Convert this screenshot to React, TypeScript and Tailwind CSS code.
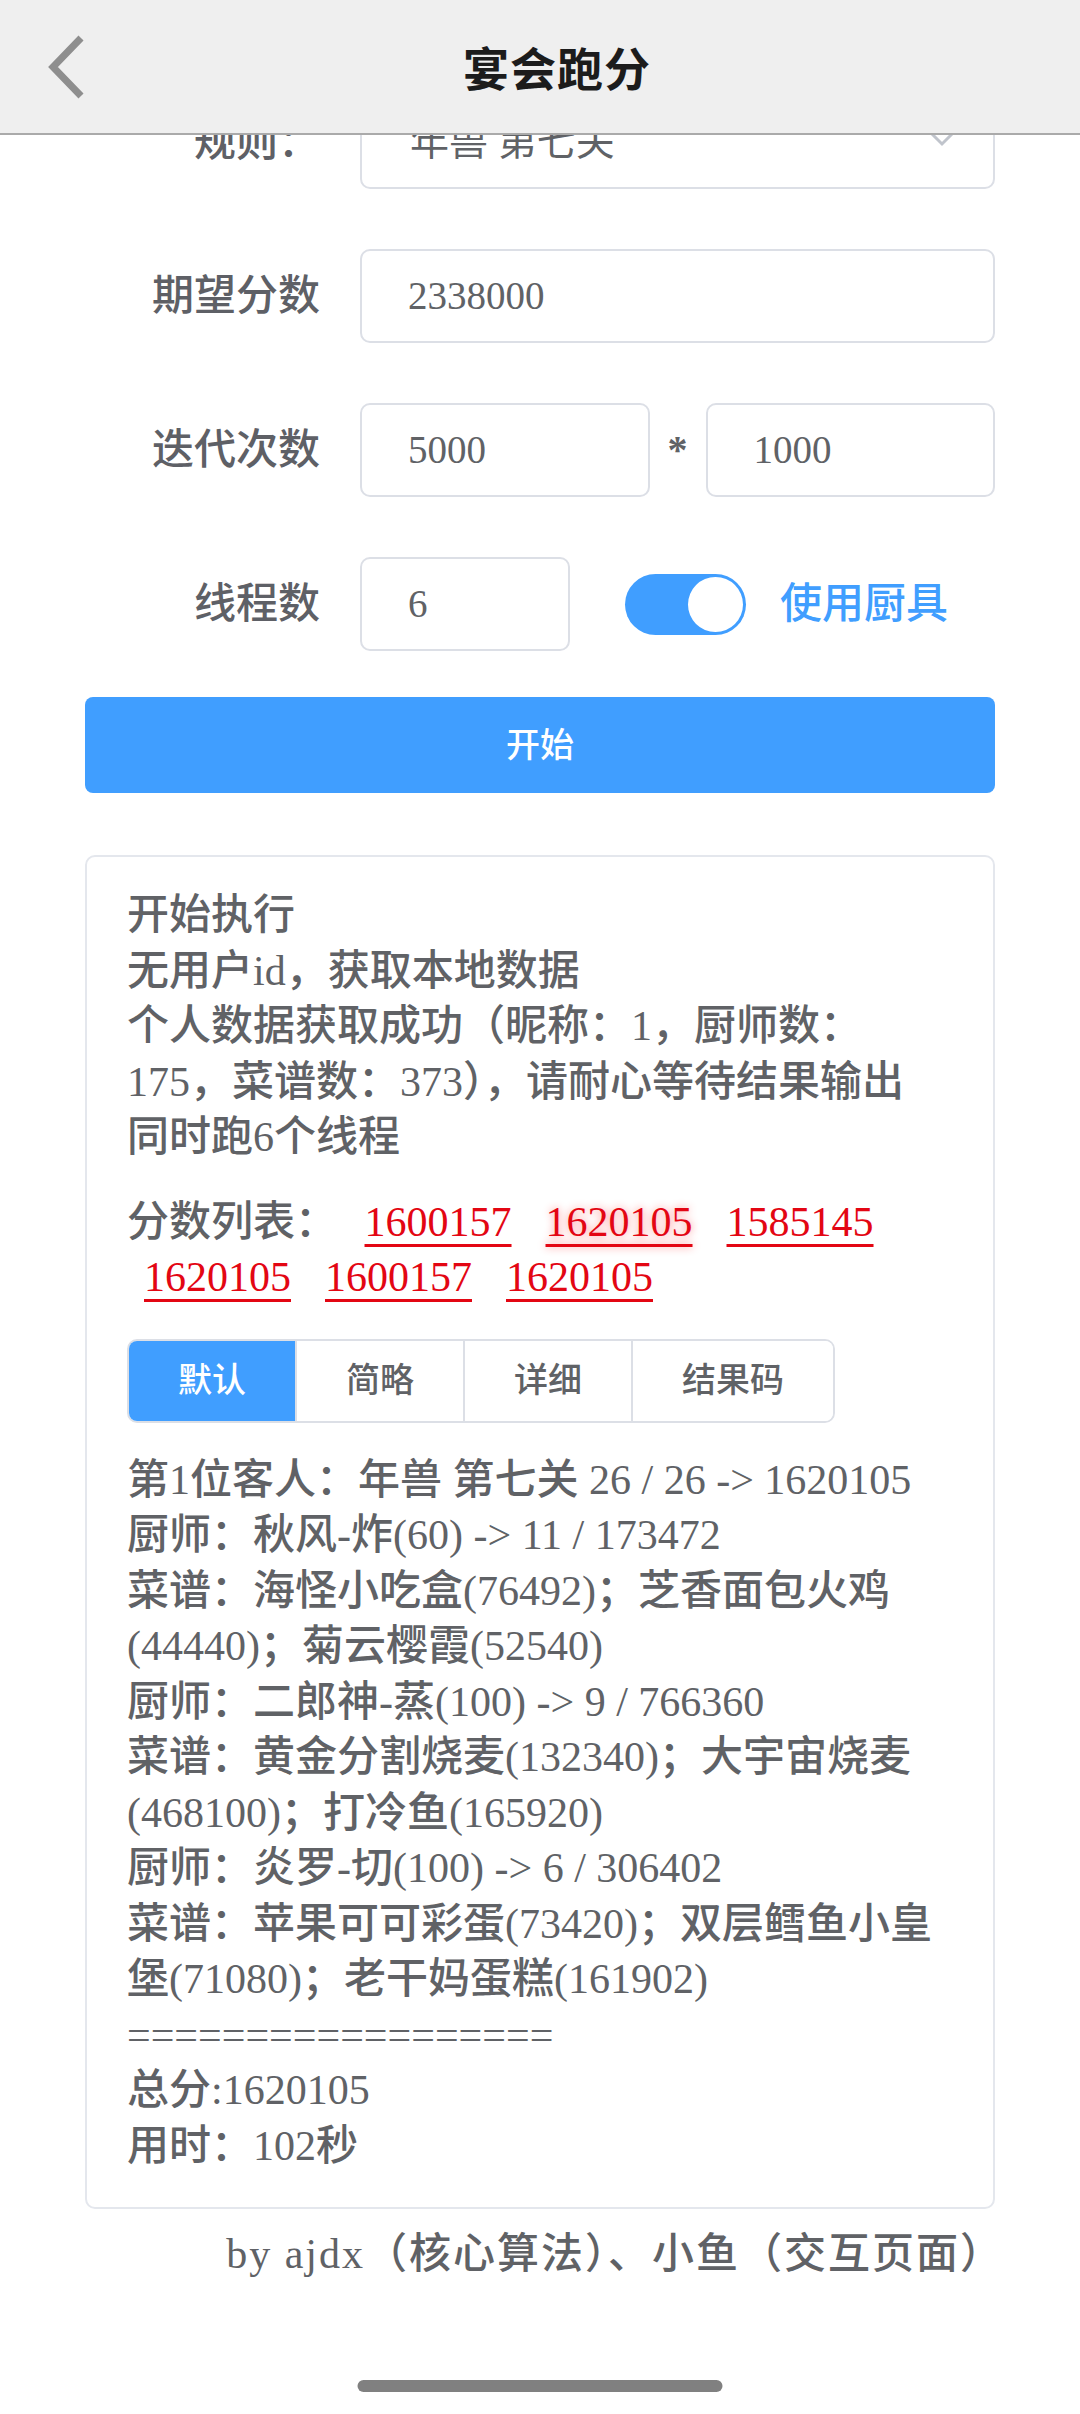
import React from 'react';

const scores = ['1600157', '1620105', '1585145', '1620105', '1600157', '1620105'];

const logLines = [
  '开始执行',
  '无用户id，获取本地数据',
  '个人数据获取成功（昵称：1，厨师数：175，菜谱数：373），请耐心等待结果输出',
  '同时跑6个线程',
];

const resultLines = [
  '第1位客人：年兽 第七关 26 / 26 -> 1620105',
  '厨师：秋风-炸(60) -> 11 / 173472',
  '菜谱：海怪小吃盒(76492)；芝香面包火鸡(44440)；菊云樱霞(52540)',
  '厨师：二郎神-蒸(100) -> 9 / 766360',
  '菜谱：黄金分割烧麦(132340)；大宇宙烧麦(468100)；打冷鱼(165920)',
  '厨师：炎罗-切(100) -> 6 / 306402',
  '菜谱：苹果可可彩蛋(73420)；双层鳕鱼小皇堡(71080)；老干妈蛋糕(161902)',
  '==================',
  '总分:1620105',
  '用时：102秒',
];

const tabs = ['默认', '简略', '详细', '结果码'];

const Field: React.FC<{ label: string; children: React.ReactNode; className?: string }> = ({ label, children, className }) => (
  <div className={`flex items-center ${className ?? ''}`}>
    <div className="w-[235px] shrink-0 text-right text-[42px] font-medium text-[#5e6066]">{label}</div>
    <div className="ml-[40px] flex flex-1 items-center">{children}</div>
  </div>
);

const Input: React.FC<{ value: string; className?: string }> = ({ value, className }) => (
  <div className={`flex h-[94px] items-center rounded-[10px] border-2 border-[#dcdfe6] bg-white pl-[46px] text-[39px] text-[#606266] ${className ?? ''}`}>
    {value}
  </div>
);

const App: React.FC = () => {
  return (
    <div className="relative h-[2414px] w-full overflow-hidden bg-white font-['Liberation_Serif','Noto_Sans_CJK_SC',serif]">
      {/* Top bar overlays the scrolled form */}
      <header className="absolute left-0 top-0 z-10 flex h-[135px] w-full items-center justify-center border-b-2 border-[#aaaaaa] bg-[#efefef] pl-[34px]">
        <svg className="absolute left-[44px] top-[35px]" width="42" height="64" viewBox="0 0 42 64" fill="none">
          <path d="M37 3 L9 32 L37 61" stroke="#8e8e8e" strokeWidth="7" />
        </svg>
        <h1 className="font-['Noto_Sans_CJK_SC',sans-serif] text-[46px] font-bold tracking-[1px] text-[#1c1c1c]">宴会跑分</h1>
      </header>

      <main className="px-[85px] pt-[95px]">
        <Field label="规则：">
          <div className="relative flex h-[94px] flex-1 items-center rounded-[10px] border-2 border-[#dcdfe6] pl-[48px] text-[39px] text-[#606266]">
            年兽 第七关
            <svg className="absolute right-[38px] top-[34px]" width="26" height="16" viewBox="0 0 26 16" fill="none">
              <path d="M2 2 L13 13 L24 2" stroke="#c0c4cc" strokeWidth="3" />
            </svg>
          </div>
        </Field>

        <Field label="期望分数" className="mt-[60px]">
          <Input value="2338000" className="flex-1" />
        </Field>

        <Field label="迭代次数" className="mt-[60px]">
          <Input value="5000" className="flex-1" />
          <div className="w-[56px] text-center text-[40px] font-bold text-[#606266]">*</div>
          <Input value="1000" className="flex-1" />
        </Field>

        <Field label="线程数" className="mt-[60px]">
          <Input value="6" className="w-[210px]" />
          <div className="relative ml-[55px] h-[61px] w-[121px] rounded-full bg-[#409eff]">
            <div className="absolute right-[3px] top-[3px] h-[55px] w-[55px] rounded-full bg-white" />
          </div>
          <span className="ml-[34px] text-[42px] font-medium text-[#409eff]">使用厨具</span>
        </Field>

        <button className="mt-[46px] flex h-[96px] w-full items-center justify-center rounded-[8px] bg-[#409eff] text-[34px] font-medium text-white">
          开始
        </button>

        <section className="mt-[62px] rounded-[10px] border-2 border-[#e4e7ed] px-[40px] pb-[33px] pt-[31px] text-[42px] font-medium leading-[55.5px] text-[#606266]">
          <div>
            {logLines.map((l, i) => (
              <div key={i}>{l}</div>
            ))}
          </div>

          <div className="mt-[29px]">
            分数列表：{' '}
            {scores.map((s, i) => (
              <span
                key={i}
                className={`mx-[17px] inline-block text-[#e30613] underline decoration-[3px] underline-offset-[8px] ${
                  i === 1 ? '[text-shadow:0_0_8px_rgba(255,0,0,0.45)]' : ''
                }`}
              >
                {s}
              </span>
            ))}
          </div>

          <div className="mt-[33px] inline-flex h-[84px] overflow-hidden rounded-[10px] border-2 border-[#dcdfe6] text-[34px] leading-none">
            {tabs.map((t, i) => (
              <div
                key={t}
                className={`flex items-center px-[49px] ${
                  i === 0 ? 'bg-[#409eff] text-white' : 'border-l-2 border-[#dcdfe6] bg-white text-[#606266]'
                }`}
              >
                {t}
              </div>
            ))}
          </div>

          <div className="mt-[30px]">
            {resultLines.map((l, i) => (
              <div key={i}>{l}</div>
            ))}
          </div>
        </section>

        <p className="-mr-[9px] mt-[18px] text-right text-[42px] font-medium leading-[55px] tracking-[2px] text-[#606266]">
          by ajdx（核心算法）、小鱼（交互页面）
        </p>
      </main>

      <div className="absolute bottom-[22px] left-1/2 h-[12px] w-[365px] -translate-x-1/2 rounded-full bg-[#808080]" />
    </div>
  );
};

export default App;
